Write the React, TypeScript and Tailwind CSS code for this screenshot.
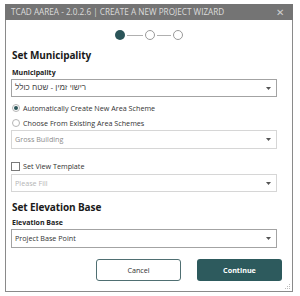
import React from "react";

const font = { fontFamily: '"Open Sans", "Noto Sans", "Liberation Sans", sans-serif' };

function Arrow() {
  return (
    <svg width="5" height="3" viewBox="0 0 5 3" className="shrink-0">
      <path d="M0 0 L5 0 L2.5 3 Z" fill="#555" />
    </svg>
  );
}

function Select({
  children,
  disabled,
  h,
}: {
  children: React.ReactNode;
  disabled?: boolean;
  h: string;
}) {
  return (
    <div
      className={`${h} w-[266px] flex items-center justify-between pl-[3px] pr-[5px] bg-white border ${
        disabled ? "border-[#d6d6d6]" : "border-[#a3a3a3]"
      }`}
    >
      {children}
      <Arrow />
    </div>
  );
}

export default function App() {
  return (
    <div className="w-[300px] h-[296px] bg-white pt-[4px] pl-[5px]" style={font}>
      <div className="relative w-[288px] h-[288px] border-x border-b border-[#8a8a8a] flex flex-col bg-white">
        <div className="h-[16px] -mx-px bg-[#747474] flex items-center justify-between pl-[6px] pr-[9px]">
          <span className="text-[8.2px] leading-none text-[#dcdcdc]">
            TCAD AAREA - 2.0.2.6 | CREATE A NEW PROJECT WIZARD
          </span>
          <span className="text-[10px] leading-none text-[#cfcfcf]">✕</span>
        </div>

        <div className="flex flex-col pl-[5px]">
          {/* stepper */}
          <div className="mt-[10px] h-[10px] flex items-center justify-center pr-[6px]">
            <div className="w-[10px] h-[10px] rounded-full bg-[#2b5559]" />
            <div className="w-[16px] h-px bg-[#b0b0b0] mx-[2px]" />
            <div className="w-[10px] h-[10px] rounded-full border border-[#9a9a9a] bg-white" />
            <div className="w-[14px] h-px bg-[#b0b0b0] mx-[2px]" />
            <div className="w-[10px] h-[10px] rounded-full border border-[#9a9a9a] bg-white" />
          </div>

          <div className="mt-[8px] h-[14px] leading-[14px] text-[10px] tracking-[-0.1px] font-bold text-[#1a1a1a] pl-[1px]">
            Set Municipality
          </div>
          <div className="mt-[6px] h-[10px] leading-[10px] text-[7px] font-bold text-[#222] pl-[1px]">
            Municipality
          </div>
          <div className="mt-[1px]">
            <Select h="h-[18px]">
              <span
                dir="rtl"
                className="text-[8px] font-normal text-[#444]"
                style={{ fontFamily: '"Liberation Sans", "DejaVu Sans", sans-serif' }}
              >
                רישוי זמין - שטח כולל
              </span>
            </Select>
          </div>

          <div className="mt-[6px] h-[10px] flex items-center gap-[3px] pl-[1px]">
            <div className="w-[8px] h-[8px] rounded-full border border-[#b5b5b5] flex items-center justify-center">
              <div className="w-[4px] h-[4px] rounded-full bg-[#2b5559]" />
            </div>
            <span className="text-[7.2px] text-[#333]">Automatically Create New Area Scheme</span>
          </div>
          <div className="mt-[5px] h-[10px] flex items-center gap-[3px] pl-[1px]">
            <div className="w-[8px] h-[8px] rounded-full border border-[#b5b5b5]" />
            <span className="text-[7.2px] text-[#333]">Choose From Existing Area Schemes</span>
          </div>

          <div className="mt-[2px]">
            <Select h="h-[19px]" disabled>
              <span className="text-[7.2px] text-[#8c8c8c]">Gross Building</span>
            </Select>
          </div>

          <div className="mt-[12px] h-[10px] flex items-center gap-[3px]">
            <div className="w-[9px] h-[9px] border border-[#7a7a7a] bg-white" />
            <span className="text-[7.2px] text-[#333]">Set View Template</span>
          </div>

          <div className="mt-[3px]">
            <Select h="h-[18px]" disabled>
              <span className="text-[7.2px] text-[#b5b5b5]">Please Fill</span>
            </Select>
          </div>

          <div className="mt-[8px] h-[14px] leading-[14px] text-[10px] tracking-[-0.1px] font-bold text-[#1a1a1a] pl-[1px]">
            Set Elevation Base
          </div>
          <div className="mt-[4px] h-[10px] leading-[10px] text-[7px] font-bold text-[#222] pl-[1px]">
            Elevation Base
          </div>
          <div className="mt-[1px]">
            <Select h="h-[19px]">
              <span className="text-[7.2px] text-[#333]">Project Base Point</span>
            </Select>
          </div>

          <div className="mt-[11px] flex justify-end gap-[16px] pr-[10px]">
            <button className="w-[85px] h-[22px] rounded-[3px] border border-[#4f6f72] bg-white text-[7.2px] text-[#333]">
              Cancel
            </button>
            <button className="w-[85px] h-[22px] rounded-[3px] bg-[#2d5a5d] text-[7.2px] font-bold text-white">
              Continue
            </button>
          </div>
        </div>

        <svg width="6" height="6" viewBox="0 0 6 6" className="absolute right-[1px] bottom-[1px]">
          <rect x="4" y="0" width="1" height="1" fill="#bbb" />
          <rect x="2" y="2" width="1" height="1" fill="#bbb" />
          <rect x="4" y="2" width="1" height="1" fill="#bbb" />
          <rect x="0" y="4" width="1" height="1" fill="#bbb" />
          <rect x="2" y="4" width="1" height="1" fill="#bbb" />
          <rect x="4" y="4" width="1" height="1" fill="#bbb" />
        </svg>
      </div>
    </div>
  );
}
